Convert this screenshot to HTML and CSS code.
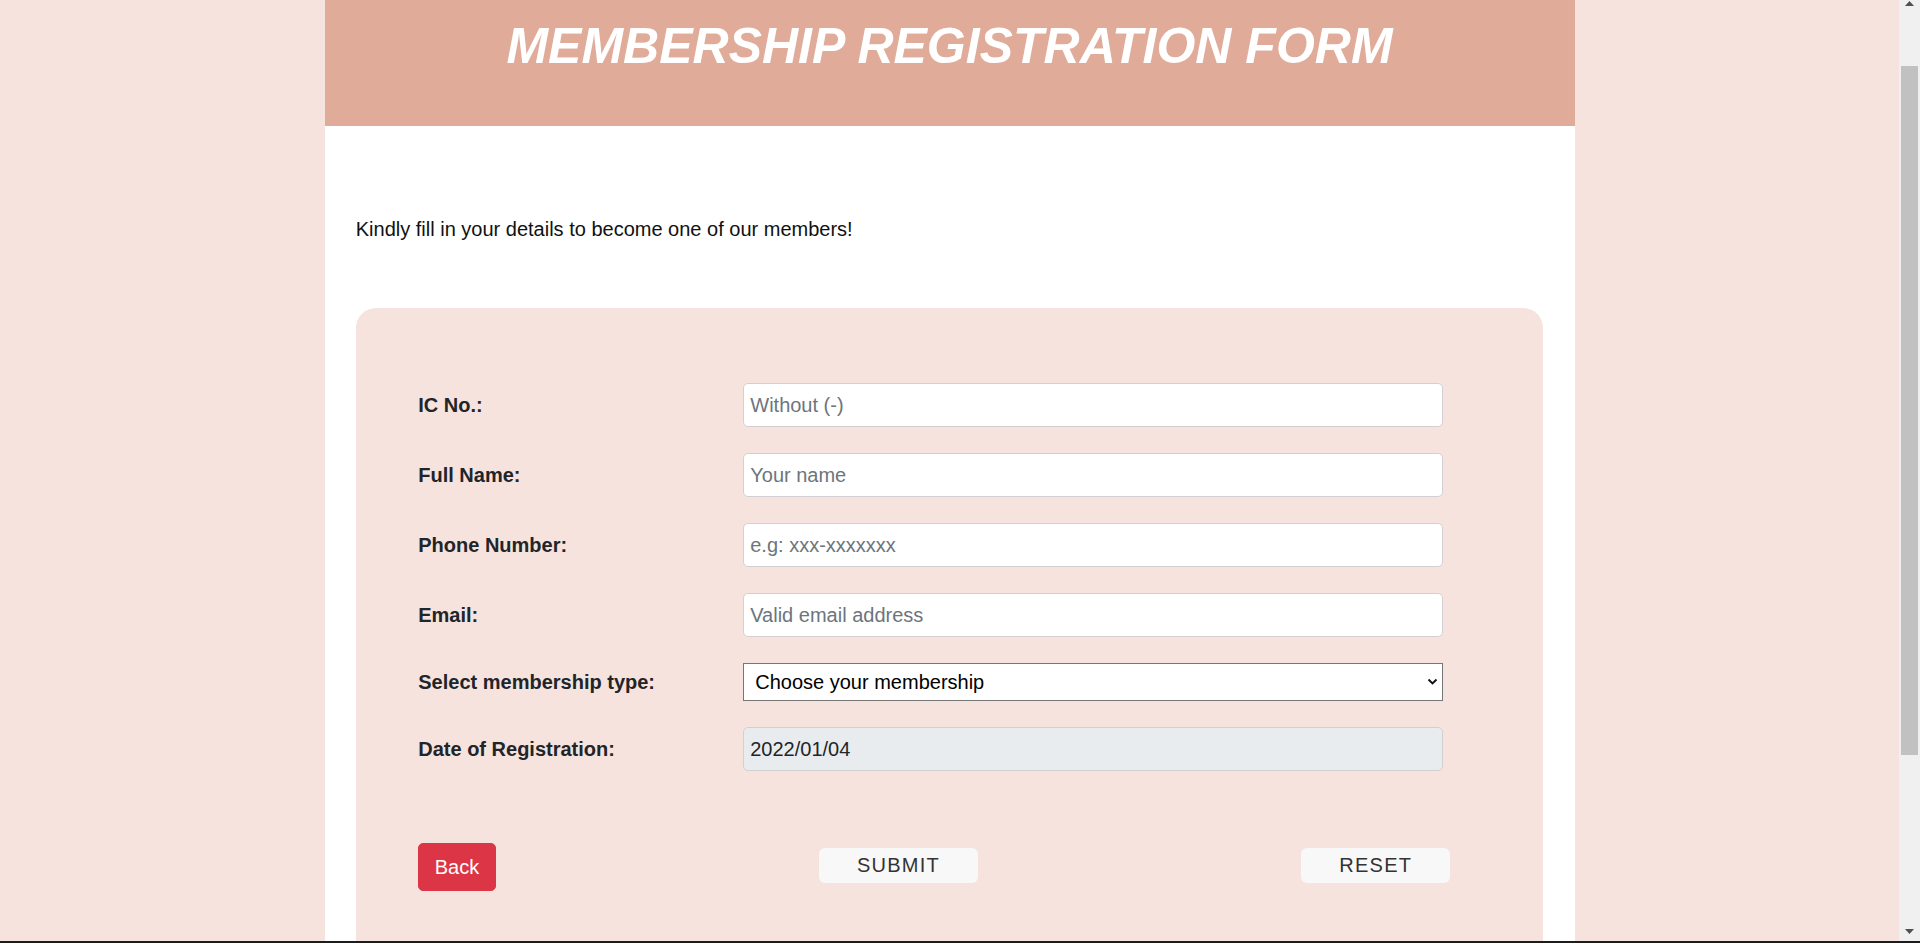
FILE: index.html
```html
<!DOCTYPE html>
<html lang="en">
<head>
<meta charset="utf-8">
<title>Membership Registration Form</title>
<link rel="stylesheet" href="styles.css">
</head>
<body>
<div class="page">
  <header class="banner">
    <h1 class="title">MEMBERSHIP REGISTRATION FORM</h1>
  </header>
  <main class="content">
    <p class="intro">Kindly fill in your details to become one of our members!</p>
    <form class="card">
      <div class="fields">
        <label class="label" for="ic">IC No.:</label>
        <input class="field" id="ic" type="text" placeholder="Without (-)">

        <label class="label" for="name">Full Name:</label>
        <input class="field" id="name" type="text" placeholder="Your name">

        <label class="label" for="phone">Phone Number:</label>
        <input class="field" id="phone" type="text" placeholder="e.g: xxx-xxxxxxx">

        <label class="label" for="email">Email:</label>
        <input class="field" id="email" type="text" placeholder="Valid email address">

        <label class="label" for="type">Select membership type:</label>
        <div class="select-wrap">
          <select class="select" id="type">
            <option>Choose your membership</option>
          </select>
          <svg class="chevron" width="11" height="8" viewBox="0 0 11 8"><polyline points="1.5,1.5 5.5,5.5 9.5,1.5" fill="none" stroke="#111" stroke-width="1.9"/></svg>
        </div>

        <label class="label" for="date">Date of Registration:</label>
        <input class="field field-readonly" id="date" type="text" value="2022/01/04" readonly>
      </div>
      <div class="actions">
        <button type="button" class="btn-back">Back</button>
        <button type="submit" class="btn-plain">SUBMIT</button>
        <button type="reset" class="btn-plain">RESET</button>
      </div>
    </form>
  </main>
</div>
<div class="scrollbar" aria-hidden="true">
  <svg class="scroll-arrow scroll-up" width="9" height="5" viewBox="0 0 9 5"><polygon points="4.5,0 9,5 0,5" fill="#505050"/></svg>
  <div class="scroll-thumb"></div>
  <svg class="scroll-arrow scroll-down" width="9" height="5" viewBox="0 0 9 5"><polygon points="0,0 9,0 4.5,5" fill="#505050"/></svg>
</div>
<div class="frame-edge"></div>
<script src="script.js"></script>
</body>
</html>
```

FILE: styles.css
```css
html, body {
  margin: 0;
  padding: 0;
}
html {
  scrollbar-width: none;
}
::-webkit-scrollbar {
  display: none;
}
body {
  margin-right: 21px;
  background: #f6e3de;
  font-family: "Liberation Sans", Arial, sans-serif;
  color: #212529;
}
.page {
  width: 1250px;
  margin: 0 auto;
  background: #ffffff;
}
.banner {
  background: #e0ab99;
  padding: 87px 0 51px;
}
.title {
  margin: 0;
  font-size: 50px;
  line-height: 58px;
  font-weight: bold;
  font-style: italic;
  color: #ffffff;
  text-align: center;
}
.content {
  padding: 0 31.25px 180px;
}
.intro {
  margin: 92px 0 67px;
  font-size: 20px;
  line-height: 23px;
  color: #111111;
}
.card {
  background: #f6e3de;
  border-radius: 20px;
  padding: 75px 62.5px 100px;
}
.fields {
  display: grid;
  grid-template-columns: 325px 700px;
  row-gap: 26px;
  align-items: center;
}
.label {
  font-size: 20px;
  font-weight: bold;
  color: #212529;
}
.field {
  box-sizing: border-box;
  width: 700px;
  height: 44px;
  margin: 0;
  padding: 1px 6px 0;
  border: 1px solid #d3d0d3;
  border-radius: 5px;
  background: #ffffff;
  font-family: "Liberation Sans", Arial, sans-serif;
  font-size: 20px;
  color: #212529;
  outline: none;
}
.field::placeholder {
  color: #6c757d;
  opacity: 1;
}
.field-readonly {
  background: #e9ecef;
}
.select-wrap {
  position: relative;
  width: 700px;
  height: 38px;
}
.select {
  appearance: none;
  -webkit-appearance: none;
  box-sizing: border-box;
  width: 700px;
  height: 38px;
  margin: 0;
  padding: 0 0 0 11px;
  border: 1px solid #767676;
  border-radius: 0;
  background: #ffffff;
  font-family: "Liberation Sans", Arial, sans-serif;
  font-size: 20px;
  color: #000000;
}
.chevron {
  position: absolute;
  right: 5px;
  top: 15px;
  pointer-events: none;
}
.actions {
  width: 1032px;
  margin-top: 72px;
  display: flex;
  justify-content: space-between;
  align-items: flex-start;
}
.btn-back {
  padding: 8px 15.5px;
  border: 1px solid #dc3545;
  border-radius: 5px;
  background: #dc3545;
  color: #ffffff;
  font-family: "Liberation Sans", Arial, sans-serif;
  font-size: 20px;
  line-height: 30px;
}
.btn-plain {
  margin-top: 5px;
  padding: 6px 38px;
  border: none;
  border-radius: 6px;
  background: #f8f8f8;
  color: #333333;
  font-family: "Liberation Sans", Arial, sans-serif;
  font-size: 20px;
  line-height: 23px;
  letter-spacing: 1.25px;
}
.scrollbar {
  position: fixed;
  top: 0;
  right: 0;
  bottom: 0;
  width: 21px;
  background: #f0f0f0;
}
.scroll-arrow {
  position: absolute;
  left: 6px;
}
.scroll-up {
  top: 1px;
}
.scroll-down {
  top: 929px;
}
.scroll-thumb {
  position: absolute;
  left: 2px;
  top: 66px;
  width: 17px;
  height: 689px;
  background: #c1c1c1;
}
.frame-edge {
  position: fixed;
  left: 0;
  right: 0;
  bottom: 0;
  height: 2px;
  background: #1c1c1c;
}
```

FILE: script.js
```js
window.scrollTo(0, 70);
```
